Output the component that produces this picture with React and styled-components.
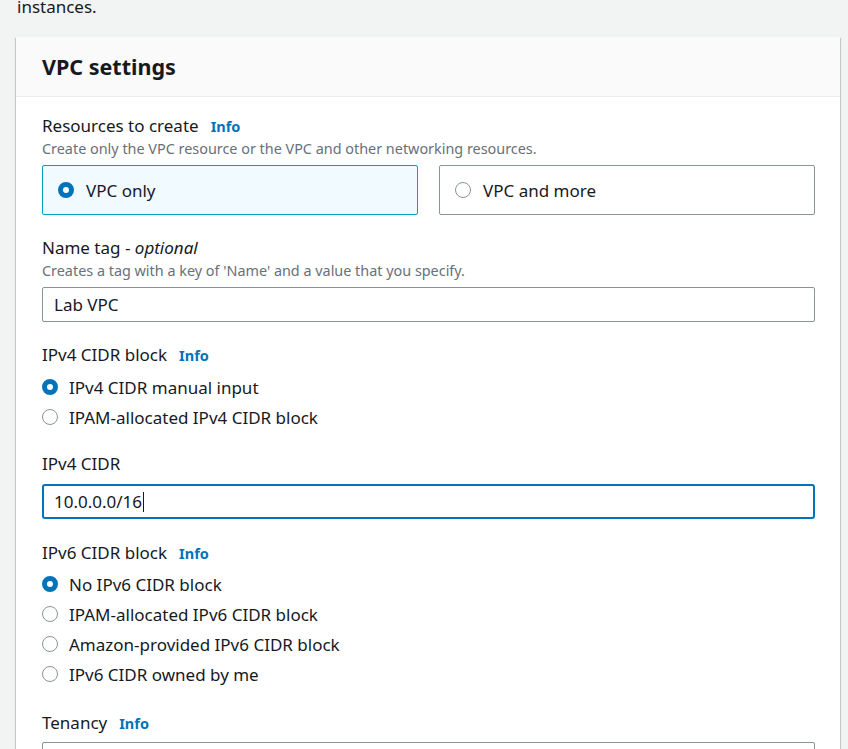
import React from "react";
import styled, { createGlobalStyle } from "styled-components";

const GlobalStyle = createGlobalStyle`
  html, body {
    margin: 0;
    padding: 0;
    background: #f2f3f3;
    font-family: "Noto Sans", "Open Sans", sans-serif;
    color: #16191f;
    overflow: hidden;
  }
`;

const Page = styled.div`
  padding: 0 8px 0 16px;
`;

const Intro = styled.p`
  margin: -3px 0 0 1px;
  font-size: 17px;
  line-height: 20px;
  color: #16191f;
`;

const Card = styled.section`
  margin-top: 20px;
  background: #fff;
  box-shadow: 0 1px 1px 0 rgba(0, 28, 36, 0.3), 1px 1px 1px 0 rgba(0, 28, 36, 0.15),
    -1px 1px 1px 0 rgba(0, 28, 36, 0.15);
`;

const CardHeader = styled.header`
  background: #fafafa;
  border-bottom: 1px solid #eaeded;
  padding: 0 25px 0 26px;
  height: 59px;
  display: flex;
  align-items: center;
`;

const Title = styled.h2`
  margin: 0;
  font-size: 21.5px;
  font-weight: 700;
  line-height: 26px;
`;

const CardBody = styled.div`
  padding: 18px 25px 0 26px;
  display: flex;
  flex-direction: column;
  gap: 22px;
`;

const Field = styled.div`
  display: flex;
  flex-direction: column;
  margin-top: ${(p) => p.$mt || 0}px;
`;

const Label = styled.div`
  font-size: 17px;
  line-height: 22px;
  margin-bottom: ${(p) => p.$mb || 2}px;
  em {
    font-style: italic;
  }
`;

const Info = styled.span`
  margin-left: 12px;
  font-size: 14.5px;
  font-weight: 700;
  color: #0073bb;
`;

const Description = styled.div`
  font-size: 14.4px;
  line-height: 20px;
  color: #687078;
  margin-bottom: 6px;
`;

const Tiles = styled.div`
  display: grid;
  grid-template-columns: 1fr 1fr;
  gap: 21px;
`;

const Tile = styled.div`
  height: 50px;
  box-sizing: border-box;
  border: 1px solid ${(p) => (p.$selected ? "#00a1c9" : "#879596")};
  background: ${(p) => (p.$selected ? "#f1faff" : "#fff")};
  border-radius: 2px;
  padding: 0 15px;
  display: flex;
  align-items: center;
  gap: 12px;
  font-size: 17px;
`;

const Radio = styled.span`
  flex: none;
  width: 16px;
  height: 16px;
  box-sizing: border-box;
  border-radius: 50%;
  background: #fff;
  border: ${(p) => (p.$checked ? "5px solid #0073bb" : "1.5px solid #879596")};
`;

const RadioList = styled.div`
  display: flex;
  flex-direction: column;
  gap: 6px;
  padding-bottom: 2px;
`;

const RadioRow = styled.div`
  height: 24px;
  display: flex;
  align-items: center;
  gap: 11px;
  font-size: 17px;
`;

const Input = styled.div`
  height: 35px;
  box-sizing: border-box;
  border: ${(p) => (p.$focused ? "2px solid #0073bb" : "1px solid #879596")};
  border-radius: ${(p) => (p.$focused ? 3 : 2)}px;
  padding: 0 ${(p) => (p.$focused ? 10 : 11)}px;
  display: flex;
  align-items: center;
  font-size: 17px;
  background: #fff;
`;

const Caret = styled.span`
  display: inline-block;
  width: 1px;
  height: 20px;
  background: #16191f;
  margin-left: 1px;
`;

const RadioGroup = ({ options }) => (
  <RadioList>
    {options.map((o) => (
      <RadioRow key={o.label}>
        <Radio $checked={o.checked} />
        {o.label}
      </RadioRow>
    ))}
  </RadioList>
);

export default function App() {
  return (
    <Page>
      <GlobalStyle />
      <Intro>instances.</Intro>
      <Card>
        <CardHeader>
          <Title>VPC settings</Title>
        </CardHeader>
        <CardBody>
          <Field>
            <Label>
              Resources to create<Info>Info</Info>
            </Label>
            <Description>
              Create only the VPC resource or the VPC and other networking resources.
            </Description>
            <Tiles>
              <Tile $selected>
                <Radio $checked />
                VPC only
              </Tile>
              <Tile>
                <Radio />
                VPC and more
              </Tile>
            </Tiles>
          </Field>

          <Field>
            <Label>
              Name tag - <em>optional</em>
            </Label>
            <Description>
              Creates a tag with a key of 'Name' and a value that you specify.
            </Description>
            <Input>Lab VPC</Input>
          </Field>

          <Field>
            <Label $mb={9}>
              IPv4 CIDR block<Info>Info</Info>
            </Label>
            <RadioGroup
              options={[
                { label: "IPv4 CIDR manual input", checked: true },
                { label: "IPAM-allocated IPv4 CIDR block" },
              ]}
            />
          </Field>

          <Field>
            <Label $mb={9}>IPv4 CIDR</Label>
            <Input $focused>
              10.0.0.0/16
              <Caret />
            </Input>
          </Field>

          <Field $mt={1}>
            <Label $mb={8}>
              IPv6 CIDR block<Info>Info</Info>
            </Label>
            <RadioGroup
              options={[
                { label: "No IPv6 CIDR block", checked: true },
                { label: "IPAM-allocated IPv6 CIDR block" },
                { label: "Amazon-provided IPv6 CIDR block" },
                { label: "IPv6 CIDR owned by me" },
              ]}
            />
          </Field>

          <Field $mt={2}>
            <Label $mb={8}>
              Tenancy<Info>Info</Info>
            </Label>
            <Input />
          </Field>
        </CardBody>
      </Card>
    </Page>
  );
}
